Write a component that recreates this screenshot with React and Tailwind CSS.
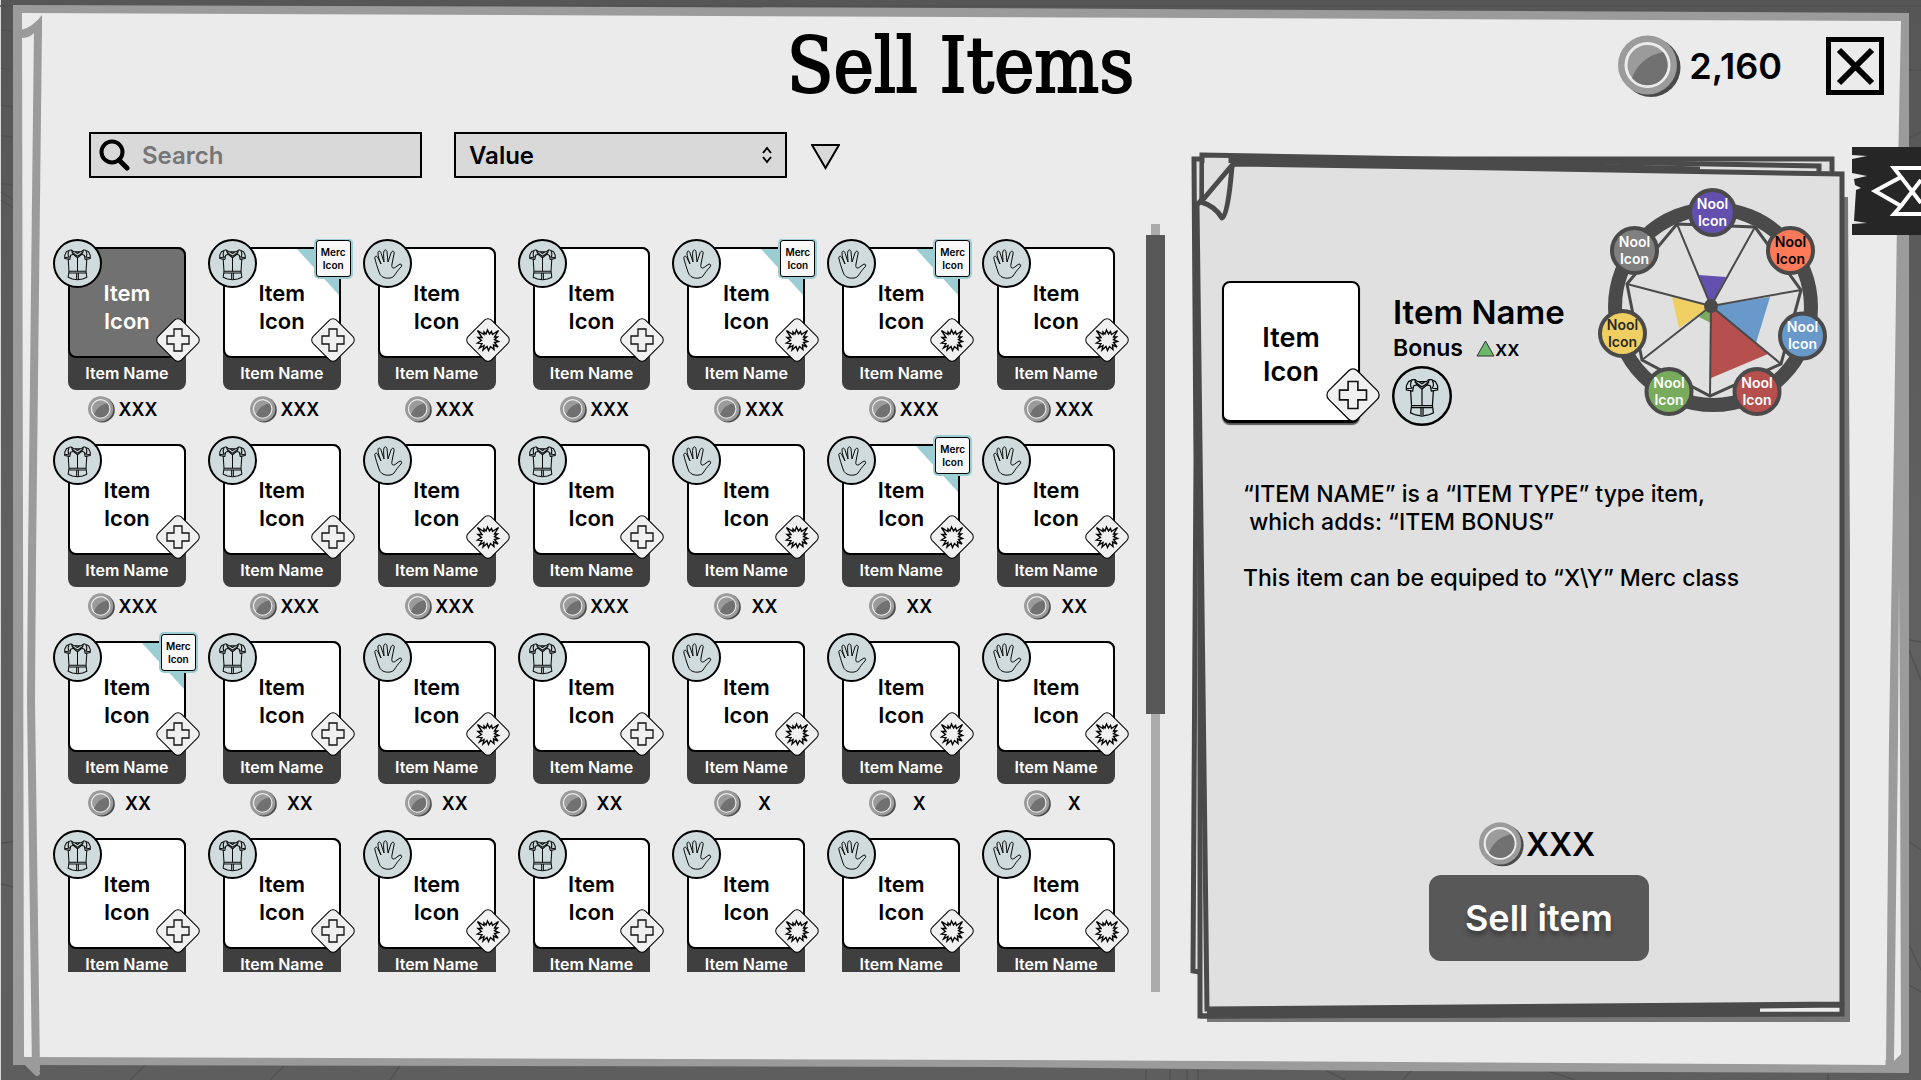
import React from "react";

const ROWS = [
  { prices: ["XXX", "XXX", "XXX", "XXX", "XXX", "XXX", "XXX"], merc: [1, 4, 5] },
  { prices: ["XXX", "XXX", "XXX", "XXX", "XX", "XX", "XX"], merc: [5] },
  { prices: ["XX", "XX", "XX", "XX", "X", "X", "X"], merc: [0] },
  { prices: ["X", "X", "X", "X", "X", "X", "X"], merc: [] },
];
const COLUMNS = ["armor", "armor", "hand", "armor", "hand", "hand", "hand"];

const ITEMS = ROWS.flatMap((row, r) =>
  COLUMNS.map((type, c) => ({
    id: `${r}-${c}`,
    type,
    first: c === 0,
    price: row.prices[c],
    merc: row.merc.includes(c),
    selected: r === 0 && c === 0,
  }))
);

function Backdrop() {
  return (
    <svg
      className="absolute inset-0 h-full w-full"
      viewBox="0 0 1921 1080"
      preserveAspectRatio="none"
      aria-hidden="true"
    >
      <defs>
        <linearGradient id="wood" x1="0" y1="0" x2="0" y2="1">
          <stop offset="0" stopColor="#565656" />
          <stop offset="0.5" stopColor="#606060" />
          <stop offset="1" stopColor="#5e5e5e" />
        </linearGradient>
      </defs>
      <rect width="1921" height="1080" fill="url(#wood)" />
      <rect width="1" height="1080" fill="#d8d8d8" />
      <g stroke="#525252" strokeWidth="1.5" fill="none">
        <path d="M0 6H1921" />
        <path d="M1 30L13 31M1 68L10 70M1 105L13 107M1 136L13 137M1 184L13 185M1 192L13 200M1 200L13 208M1 843L13 842M1 884L13 887" />
        <path d="M130 1080L146 1064M270 1080L284 1066M390 1080L400 1066M1146 1080V1070M1170 1080V1070M1187 1080V1070M1198 1080V1070M1325 1070L1345 1080M1412 1070L1403 1080M1545 1070L1575 1080M1828 1080V1072" />
        <path d="M1909 70H1921M1909 138L1921 132M1909 210L1921 230M1909 640L1921 642M1909 650L1921 680M1909 842L1921 850M1909 945L1921 970M1909 985L1921 992" />
      </g>
      <path d="M13 5L960 8L1909 13V1073L1400 1071L1000 1067L13 1065Z" fill="#9b9b9b" />
      <path d="M22 13L960 17L1901 21L1897 220L1894 440L1889 740L1886 1065L1400 1062L1000 1060L24 1057Z" fill="#ebebeb" />
      <path d="M1899 580L1898 740L1894 1061L1901 1054L1900 740Z" fill="#ebebeb" />
      <path d="M1888 1060V1072" stroke="#9b9b9b" strokeWidth="5" />
      <path d="M38 28L36 200L32 560L31 700L36 1071" stroke="#9b9b9b" strokeWidth="8" fill="none" />
      <path d="M24 1060L37 1073" stroke="#9b9b9b" strokeWidth="6" strokeLinecap="round" />
      <path d="M21 38V30Q33 27 42 15V36L34 60V33Q30 38 21 38Z" fill="#9b9b9b" />
    </svg>
  );
}

function PanelSheets() {
  return (
    <svg
      className="absolute inset-0 h-full w-full"
      viewBox="1190 150 662 874"
      preserveAspectRatio="none"
      aria-hidden="true"
    >
      <path d="M1207 1014H1843V197H1848L1850 560V1022H1207Z" fill="#777777" />
      <g stroke="#4a4a4a" strokeWidth="5" fill="#e0e0e0">
        <path d="M1194 159H1832V190H1400V973H1205L1193 971L1196 460Z" />
        <path d="M1202 155L1819 166V200H1500V1015L1200 1016L1200 600Z" />
        <path d="M1234 164L1500 168L1842 174V1004L1207 1009L1197 205Z" />
      </g>
      <path d="M1200 1016L1842 1014V1005L1500 1009L1207 1012" stroke="#4a4a4a" strokeWidth="5" fill="none" />
      <path d="M1230 158L1500 163L1700 168L1500 166L1230 162Z" stroke="#4a4a4a" strokeWidth="3" fill="#4a4a4a" />
      <path d="M1300 1013L1760 1010" stroke="#4a4a4a" strokeWidth="5" />
      <path d="M1204 163H1232L1204 196Z" fill="#e0e0e0" />
      <path
        d="M1233 164L1201 202Q1215 206 1222 218Q1228 216 1232 166"
        fill="#e0e0e0"
        stroke="#4a4a4a"
        strokeWidth="5"
        strokeLinejoin="round"
      />
    </svg>
  );
}

function Coin({ className }) {
  return (
    <svg className={className} viewBox="0 0 63 63" aria-hidden="true">
      <circle cx="33" cy="32.500" r="29.500" fill="#4a4a4a" />
      <circle cx="29.500" cy="30" r="29.500" fill="#9b9b9b" />
      <circle cx="29.500" cy="30" r="21.500" fill="#9b9b9b" stroke="#ebebeb" strokeWidth="3" />
      <path d="M45 17A20 20 0 1 1 14 43Q22 22 45 17Z" fill="#717171" />
    </svg>
  );
}

function ArmorIcon() {
  return (
    <g fill="none" stroke="#0a0a0a" strokeWidth="1.200" strokeLinejoin="round">
      <path d="M-9 -14L-13 -12L-15 -8V-4L-9 -3L-8 -8L-5 -9L-7 -14ZM9 -14L13 -12L15 -8V-4L9 -3L8 -8L5 -9L7 -14Z" />
      <path d="M-15 -5L-9 -6M15 -5L9 -6M-10 -13Q-12 -9 -10 -6M10 -13Q12 -9 10 -6" />
      <path d="M-7 -14L-4 -12H4L7 -14M-7 -12L-3 -9L0 -7L3 -9L7 -12M-5 -9L0 -5L5 -9M-3 -12L0 -10L3 -12" />
      <path d="M-11 -4L-10 11H10L11 -4" />
      <path d="M0 -5V11M-10 13H10M-10 11L-11 18L-6 20L0 21L6 20L11 18L10 11" />
      <path d="M-1 13V20M1 13V20" />
    </g>
  );
}

function HandIcon() {
  return (
    <path
      d="M-8 8C-10 2 -11 -1 -12 -5C-13 -8 -10 -9 -9 -6L-6 0C-8 -5 -9 -8 -9 -11C-9 -14 -6 -13 -6 -11L-3 -2C-3 -6 -4 -10 -3 -13C-2 -15 0 -14 0 -12L1 -2L4 -11C5 -14 8 -13 7 -10L5 0C4 5 7 5 10 2L13 0C15 0 15 2 14 3C11 6 9 9 7 12C5 15 -6 16 -8 8Z"
      fill="none"
      stroke="#0a0a0a"
      strokeWidth="1"
      strokeLinejoin="round"
    />
  );
}

function TypeBadge({ type, className }) {
  return (
    <svg className={className} viewBox="0 0 49 49" role="img" aria-label={type}>
      <circle cx="24.500" cy="24.500" r="23.500" fill="#cfdbdd" stroke="#000" strokeWidth="2" />
      {type === "armor" ? (
        <g transform="translate(24.500 23) scale(0.85)">
          <ArmorIcon />
        </g>
      ) : (
        <g transform="translate(24 25)">
          <HandIcon />
        </g>
      )}
    </svg>
  );
}

function BonusBadge({ type, className }) {
  return (
    <svg className={className} viewBox="-22 -22 44 44" aria-hidden="true">
      <rect x="-16.500" y="-16.500" width="33" height="33" rx="5" transform="rotate(45)" fill="#f0f0f0" stroke="#000" strokeWidth="1" />
      {type === "armor" ? (
        <path d="M-4 -11H4V-4H11V4H4V11H-4V4H-11V-4H-4Z" fill="#f0f0f0" stroke="#111" strokeWidth="1.300" />
      ) : (
        <path
          d="M-10.500 -9.500L-4 -5.500L-4 -8L-2 -6L-0.500 -10L1.500 -6L3.500 -8.500L4.500 -5.500L10.500 -9.500L6.500 -3L9.500 -3L6.500 -0.500L10.500 1.500L6.500 2.500L10 7L5.500 5L6 9.500L2.500 6.500L0.500 10.500L-1 6.500L-5 10L-4 5.500L-8.500 8L-6 3.500L-10.500 3L-6.500 0.500L-10 -2.500L-6 -2.500Z"
          fill="#f0f0f0"
          stroke="#000"
          strokeWidth="1.400"
          strokeLinejoin="miter"
        />
      )}
    </svg>
  );
}

function MercBadge() {
  return (
    <>
      <svg className="absolute top-0.5 right-0.5 h-[46px] w-[42px]" viewBox="0 0 42 46" aria-hidden="true">
        <path d="M0 0H42V46Z" fill="#9bcdd2" />
      </svg>
      <span className="absolute -top-[7px] -right-2.5 flex h-[37px] w-[35px] flex-col justify-center rounded-[3px] border border-black bg-[#f8f8f8] text-center text-[10px] leading-[13px] text-black ring-2 ring-[#9bcdd2]">
        <span>Merc</span>
        <span>Icon</span>
      </span>
    </>
  );
}

function ItemCard({ item }) {
  return (
    <li>
      <button type="button" className="relative block w-full rounded-lg bg-[#3f3f3f] text-center">
        <span
          className={
            item.selected
              ? "flex h-[111px] flex-col justify-center rounded-lg border-2 border-black bg-[#717171] pt-2 text-[22px] leading-7 text-white"
              : "flex h-[111px] flex-col justify-center rounded-lg border-2 border-black bg-white pt-2 text-[22px] leading-7 text-black"
          }
        >
          <span>Item</span>
          <span>Icon</span>
        </span>
        <span className="block h-8 text-base leading-[30px] text-white">Item Name</span>
        <TypeBadge type={item.type} className="absolute -top-2 -left-[15px] size-[49px]" />
        {item.merc && <MercBadge />}
        <BonusBadge type={item.type} className="absolute top-[71px] -right-[14px] size-11" />
      </button>
      <p className={item.first ? "mt-1.5 flex items-center pl-5" : "mt-1.5 flex items-center pl-[27px]"}>
        <Coin className="size-[27px]" />
        <span className="h-[27px] w-[46px] text-center text-lg leading-[28px]">{item.price}</span>
      </p>
    </li>
  );
}

const NOOLS = [
  { x: 132.5, y: 42.5, fill: "#6350ae", text: "#fff" },
  { x: 210.5, y: 80.5, fill: "#ff7a59", text: "#000" },
  { x: 222.5, y: 166, fill: "#6899ca", text: "#fff" },
  { x: 177, y: 221.5, fill: "#b6504e", text: "#fff" },
  { x: 89, y: 221.5, fill: "#78ab5c", text: "#fff" },
  { x: 42.5, y: 163.5, fill: "#efcf62", text: "#2a2a2a" },
  { x: 54.5, y: 80.5, fill: "#7f7f7f", text: "#fff" },
];

function NoolWheel() {
  return (
    <svg className="absolute top-[20px] right-[2px] h-[260px] w-[270px]" viewBox="0 0 270 260" role="img" aria-label="Nool chart">
      <circle cx="133" cy="137" r="98" fill="none" stroke="#4a4a4a" strokeWidth="14" />
      <path d="M119 105L146 107L131 136Z" fill="#6350ae" />
      <path d="M190 127L176 173L131 136Z" fill="#6899ca" />
      <path d="M188 184L131 208V136Z" fill="#b6504e" />
      <path d="M119 147L131 153V136Z" fill="#78ab5c" />
      <path d="M92 127L99 158L131 136Z" fill="#efcf62" />
      <g stroke="#4a4a4a" fill="none" strokeWidth="3">
        <path d="M97 54L175 57L221 120L201 194L130 226L62 190L47 114Z" />
        <g strokeWidth="2">
          <path d="M97 54L131 136L175 57M221 120L131 136L201 194M130 226L131 136L62 190M47 114L131 136" />
        </g>
      </g>
      <circle cx="131" cy="136" r="7" fill="#4a4a4a" />
      {NOOLS.map((n) => (
        <g key={n.fill}>
          <circle cx={n.x} cy={n.y} r="22.500" fill={n.fill} stroke="#4a4a4a" strokeWidth="4" />
          <text x={n.x} y={n.y - 4} textAnchor="middle" fill={n.text} className="text-[14px]">
            Nool
          </text>
          <text x={n.x} y={n.y + 13} textAnchor="middle" fill={n.text} className="text-[14px]">
            Icon
          </text>
        </g>
      ))}
    </svg>
  );
}

function DetailPanel() {
  return (
    <section aria-label="Item details" className="relative mt-[18px] mr-[69px] mb-14 flex w-[662px] max-w-[36%] flex-col">
      <PanelSheets />
      <NoolWheel />
      <div className="relative mt-[131px] ml-8 flex items-start gap-[33px]">
        <div className="relative flex h-[142px] w-[138px] shrink-0 flex-col justify-center rounded-lg border-2 border-b-3 border-black bg-white pt-1.5 text-center text-[27px] leading-[34px] shadow-[0_2px_1px_#555]">
          <span>Item</span>
          <span>Icon</span>
          <BonusBadge type="armor" className="absolute -right-[22px] -bottom-0.5 size-[54px]" />
        </div>
        <div className="flex flex-col pt-[11px]">
          <h2 className="text-[33px] leading-10">Item Name</h2>
          <p className="flex items-center text-[23px] leading-8">
            Bonus
            <svg className="ml-[13px] h-[17px] w-[19px]" viewBox="0 0 19 17" aria-hidden="true">
              <path d="M9.500 1L18 16H1Z" fill="#6cb96c" stroke="#333" strokeWidth="1" />
            </svg>
            <span className="text-[22px] font-medium">xx</span>
          </p>
          <TypeBadge type="armor" className="mt-0.5 -ml-px size-[60px]" />
        </div>
      </div>
      <div className="relative mt-[54px] ml-[53px] text-[23px] leading-7 font-medium">
        <p>“ITEM NAME” is a “ITEM TYPE” type item,</p>
        <p className="whitespace-pre"> which adds: “ITEM BONUS”</p>
        <p className="mt-7">This item can be equiped to “X\Y” Merc class</p>
      </div>
      <div className="relative mt-auto mb-[63px] ml-9 flex flex-col items-center">
        <p className="mr-1 mb-2 flex items-center gap-0.5 text-[32px] leading-[45px]">
          <Coin className="size-[45px]" />
          XXX
        </p>
        <button
          type="button"
          className="h-[86px] w-[220px] rounded-xl bg-[#585858] text-[36px] text-white [text-shadow:0_4px_4px_rgba(0,0,0,0.35)]"
        >
          Sell item
        </button>
      </div>
    </section>
  );
}

function SideTab() {
  return (
    <button type="button" aria-label="Previous tool" className="absolute top-[147px] right-0 h-[88px] w-[69px]">
      <svg className="h-full w-full" viewBox="0 0 69 88" aria-hidden="true">
        <path d="M0 0H69V88H0V77L15 76L2 74L4 43L9 41L3 38L2 32L15 29L0 26V12L15 9L0 8Z" fill="#262626" />
        <path
          d="M69 21H42L49 30L23 44L49 59L42 67H69M49 30L69 56M49 59L69 33"
          fill="none"
          stroke="#fff"
          strokeWidth="4"
        />
      </svg>
    </button>
  );
}

export default function App() {
  return (
    <div className="relative flex h-screen min-h-[1000px] w-full flex-col overflow-hidden font-['Inter',sans-serif] font-semibold text-black">
      <Backdrop />
      <header className="relative grid h-[132px] grid-cols-[1fr_auto_1fr] items-center pr-[37px] pl-[37px]">
        <span />
        <h1 className="font-['DejaVu_Serif_Condensed','DejaVu_Serif',serif] text-[76px] leading-[80px] font-normal [-webkit-text-stroke:2px_#000]">
          Sell Items
        </h1>
        <div className="flex items-center justify-end">
          <Coin className="size-[63px]" />
          <span className="ml-2 text-[36px] leading-[44px]">2,160</span>
          <button type="button" aria-label="Close" className="ml-11 size-[58px] border-5 border-black">
            <svg className="h-full w-full" viewBox="0 0 48 48" aria-hidden="true">
              <path d="M8 8L41 41M41 8L8 41" stroke="#000" strokeWidth="6" />
            </svg>
          </button>
        </div>
      </header>
      <main className="relative flex min-h-0 flex-1 gap-[25px] pl-[53px]">
        <div className="flex min-w-0 flex-1 flex-col pb-[88px]">
          <form className="ml-9 flex items-center">
            <label className="flex h-[46px] w-[333px] items-center border-2 border-black bg-[#d9d9d9] pl-2">
              <svg className="size-8 shrink-0" viewBox="0 0 32 32" fill="none" stroke="#000" aria-hidden="true">
                <circle cx="13" cy="13" r="10.500" strokeWidth="4" />
                <path d="M20 21L28 29" strokeWidth="5" strokeLinecap="round" />
              </svg>
              <input
                type="search"
                aria-label="Search"
                placeholder="Search"
                className="ml-[11px] w-full min-w-0 bg-transparent pt-0.5 text-2xl leading-8 outline-none placeholder:text-[#757575]"
              />
            </label>
            <div className="relative ml-8 w-[333px]">
              <select
                aria-label="Sort by"
                className="h-[46px] w-full appearance-none border-2 border-black bg-[#d9d9d9] pt-0.5 pl-[13px] text-2xl leading-8"
              >
                <option>Value</option>
                <option>Name</option>
              </select>
              <svg
                className="pointer-events-none absolute top-3.5 right-[14px] h-[18px] w-3"
                viewBox="0 0 12 18"
                fill="none"
                stroke="#000"
                strokeWidth="2"
                aria-hidden="true"
              >
                <path d="M2 7L6 2L10 7M2 11L6 16L10 11" />
              </svg>
            </div>
            <button type="button" aria-label="Sort direction" className="mt-1 ml-6">
              <svg className="h-[26px] w-[29px]" viewBox="0 0 29 26" aria-hidden="true">
                <path d="M1 1H28L14.500 24Z" fill="#d9d9d9" stroke="#000" strokeWidth="2" />
              </svg>
            </button>
          </form>
          <div className="mt-[46px] flex min-h-0 flex-1">
            <ul className="mt-[15px] mb-5 grid min-w-0 flex-1 grid-cols-7 content-start gap-x-[37px] gap-y-[21px] overflow-hidden pt-2 pr-[31px] pl-[15px]">
              {ITEMS.map((item) => (
                <ItemCard key={item.id} item={item} />
              ))}
            </ul>
            <div className="flex w-[19px] flex-col items-center" aria-hidden="true">
              <div className="h-[11px] w-[9px] bg-[#ababab]" />
              <div className="h-[479px] w-full bg-[#585858]" />
              <div className="w-[9px] flex-1 bg-[#ababab]" />
            </div>
          </div>
        </div>
        <DetailPanel />
      </main>
      <SideTab />
    </div>
  );
}
